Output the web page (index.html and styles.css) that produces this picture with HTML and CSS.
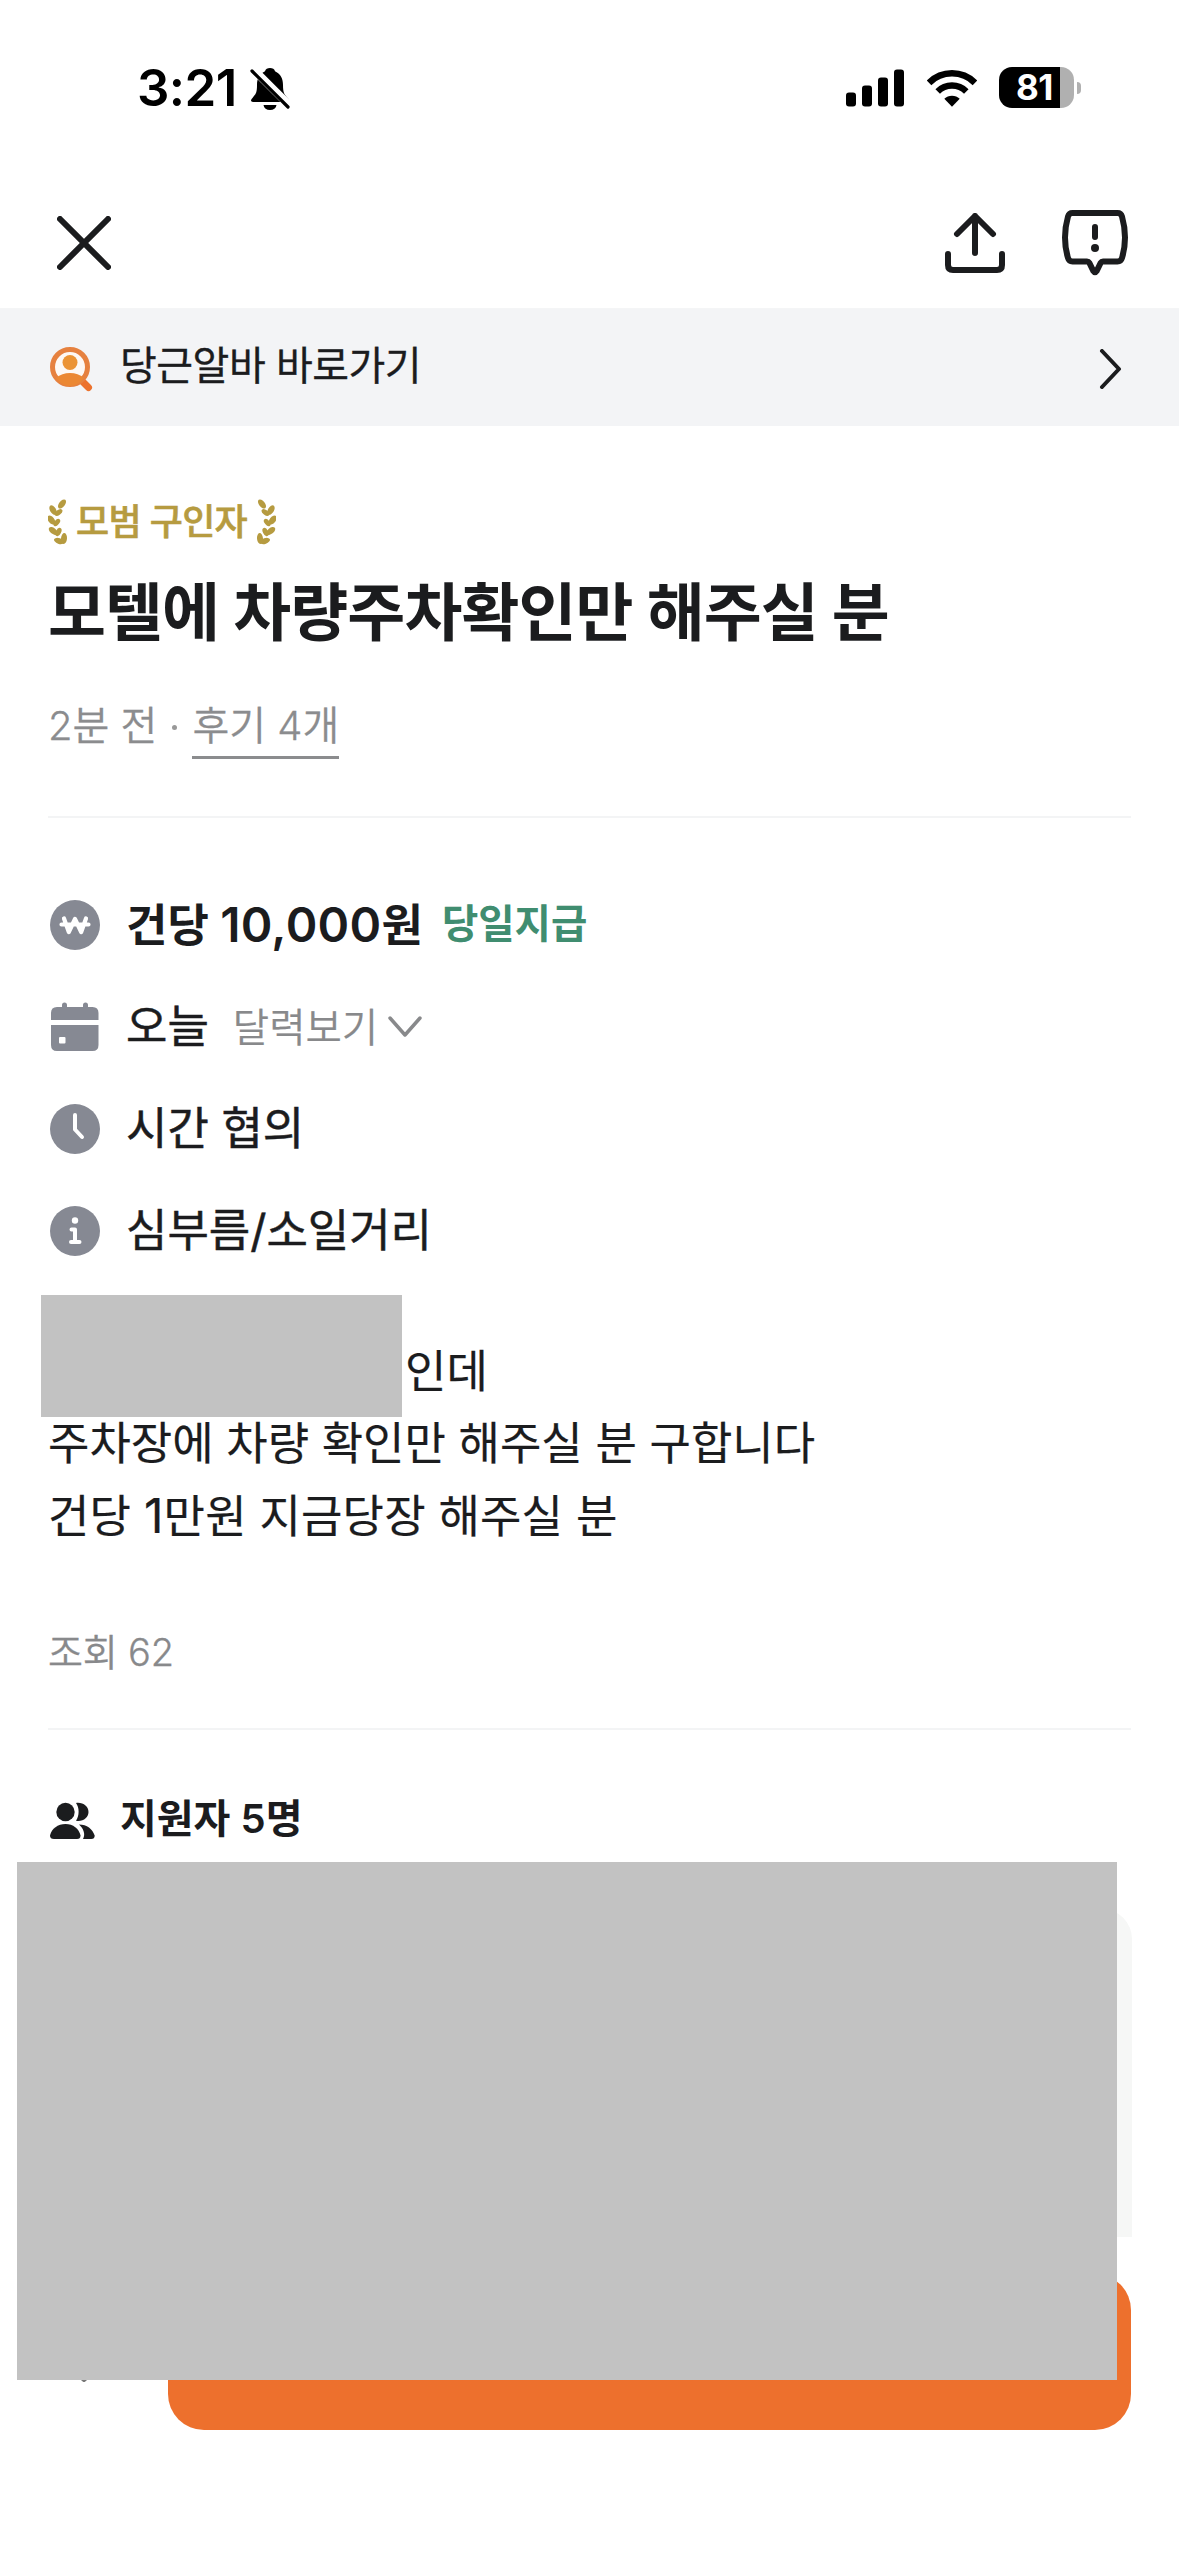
FILE: index.html
```html
<!DOCTYPE html>
<html lang="ko">
<head>
<meta charset="utf-8">
<title>당근알바</title>
<link rel="stylesheet" href="styles.css">
</head>
<body>
<div class="screen">
  <div class="status">
    <span class="time">3:21</span>
    <svg class="bell" width="40" height="44" viewBox="0 0 40 44"><path d="M20 1c-2.500 0-4.500 1.200-5 3.200C9 7 7 12 7 18c0 8-1.500 9.500-4.500 13C0 33.500 1 35 3 35h34c2 0 3-1.500.500-4-3-3.500-4.500-5-4.500-13 0-6-2-11-8-13.800C24.500 2.200 22.500 1 20 1z"/><path d="M13.500 38h13c-.5 3.300-3 5-6.500 5s-6-1.700-6.500-5z"/><path d="M3 2l36 36" stroke="#fff" stroke-width="8"/><path d="M2 4l36 36" stroke="#000" stroke-width="3.200" stroke-linecap="round"/></svg>
    <svg class="signal" width="58" height="38" viewBox="0 0 58 38"><rect y="23.500" width="10" height="14" rx="3"/><rect x="16" y="16.500" width="10" height="21" rx="3"/><rect x="32" y="8.500" width="10" height="29" rx="3"/><rect x="48" y=".5" width="10" height="37" rx="3"/></svg>
    <svg class="wifi" width="50" height="38" viewBox="0 0 50 38"><g fill="none" stroke="#000"><path d="M2 13.800a32.500 32.500 0 0 1 46 0" stroke-width="6.600"/><path d="M10.700 22.500a20.200 20.200 0 0 1 28.600 0" stroke-width="6.400"/></g><path d="M25 37.800l-7.700-8a11 11 0 0 1 15.400 0z"/></svg>
    <div class="battery"><span>81</span></div><i class="nub"></i>
  </div>
  <div class="nav">
    <svg width="54" height="54" viewBox="0 0 54 54"><path d="M3 3l48 48M51 3L3 51"/></svg>
    <svg class="share" width="60" height="60" viewBox="0 0 60 60"><path d="M30 40V3M12 21L30 3l18 18M3 41v11q0 5 5 5h44q5 0 5-5V41"/></svg>
    <svg class="report" width="66" height="66" viewBox="0 0 66 66"><path d="M10.500 3h45q3.500 0 4.500 3.500 3 10.500 3 21T60 48q-1 3.500-4.500 3.500H41q-1.500 0-2.300 1.300l-3.900 8q-1.800 2.700-3.600 0l-3.900-8Q26.500 51.500 25 51.500H10.500Q7 51.500 6 48 3 38 3 27.500T6 6.500Q7 3 10.500 3zM33 17v10"/><circle cx="33" cy="38" r="4"/></svg>
  </div>
  <div class="shortcut">
    <svg class="finder" width="44" height="46" viewBox="0 0 44 46"><path d="M30 33l8.500 8.500" stroke="#ec722d" stroke-width="7" stroke-linecap="round"/><circle cx="20" cy="21" r="17.500" fill="#fdf8f4" stroke="#e6813f" stroke-width="5"/><circle cx="20" cy="16.500" r="7.500" fill="#eb9334"/><path d="M6 32q6-5 14-5t14 5q-6 8-14 8T6 32z" fill="#eb8834"/></svg>
    <span>당근알바 바로가기</span>
    <svg class="chev" width="24" height="40" viewBox="0 0 24 40"><path d="M3 2l17 18L3 38"/></svg>
  </div>
  <div class="intro">
    <div class="badge">
      <svg width="20" height="46" viewBox="0 0 20 46"><g id="wreath"><ellipse cx="14" cy="5" rx="5.300" ry="3" transform="rotate(-52 14 5)"/><ellipse cx="5" cy="11" rx="5.200" ry="3" transform="rotate(60 5 11)"/><ellipse cx="10.500" cy="13.500" rx="4.500" ry="2.500" transform="rotate(-38 10.500 13.500)"/><ellipse cx="3.300" cy="21" rx="5.200" ry="3" transform="rotate(50 3.300 21)"/><ellipse cx="8.800" cy="23.500" rx="4.300" ry="2.500" transform="rotate(-50 8.800 23.500)"/><ellipse cx="5.300" cy="32" rx="5.200" ry="3" transform="rotate(38 5.300 32)"/><ellipse cx="10.500" cy="33" rx="4.500" ry="2.600" transform="rotate(-65 10.500 33)"/><ellipse cx="11" cy="42" rx="5.200" ry="2.800" transform="rotate(20 11 42)"/><ellipse cx="16" cy="39.500" rx="5.400" ry="3" transform="rotate(-85 16 39.500)"/></g></svg>
      <span>모범 구인자</span>
      <svg class="flip" width="20" height="46" viewBox="0 0 20 46"><use href="#wreath"/></svg>
    </div>
    <h1>모텔에 차량주차확인만 해주실 분</h1>
    <div class="meta"><span class="ago">2분 전</span><i></i><a>후기 4개</a></div>
  </div>
  <ul class="facts">
    <li>
      <svg width="50" height="50" viewBox="0 0 50 50"><circle cx="25" cy="25" r="25"/><path class="w" d="M14 18.500l4.800 13.500L25 19l6.200 13L36 18.500M11.500 24.500h27" stroke-width="4.200"/></svg>
      <b class="pay">건당 <span class="num">10,000</span>원</b><b class="green">당일지급</b>
    </li>
    <li>
      <svg width="50" height="50" viewBox="0 0 50 50"><path d="M1 18v-7q0-6 6-6h5V3q0-2.500 2.500-2.500T17 3v2h16V3q0-2.500 2.500-2.500T38 3v2h4.500q6 0 6 6v7zM1 23h47.500v20q0 6-6 6H7q-6 0-6-6z"/><rect x="9" y="35" width="6.500" height="6.500" rx="1" fill="#fff"/></svg>
      <span class="today">오늘</span><span class="cal">달력보기</span>
      <svg class="down" width="34" height="22" viewBox="0 0 34 22"><path d="M2 2l15 17L32 2"/></svg>
    </li>
    <li>
      <svg width="50" height="50" viewBox="0 0 50 50"><circle cx="25" cy="25" r="25"/><path class="w" d="M25 11v14.500l7 7.500" stroke-width="4"/></svg>
      <span class="when">시간 협의</span>
    </li>
    <li>
      <svg width="50" height="50" viewBox="0 0 50 50"><circle cx="25" cy="25" r="25"/><circle cx="25" cy="14.500" r="3.200" fill="#fff"/><path class="w" d="M21.500 23.500H25V36M21 36h8.500" stroke-width="4"/></svg>
      <span class="kind">심부름/소일거리</span>
    </li>
  </ul>
  <div class="body">
    <p class="l1"><span>인데</span></p>
    <p><span class="l2">주차장에 차량 확인만 해주실 분 구합니다</span></p>
    <p><span class="l3">건당 <span class="num">1</span>만원 지금당장 해주실 분</span></p>
    <div class="mask small"></div>
  </div>
  <div class="views"><span>조회 62</span></div>
  <div class="applicants">
    <svg width="46" height="38" viewBox="0 0 46 38"><circle cx="15.500" cy="10" r="9.200"/><path d="M0 33.500C1.500 26.500 8 22 15.500 22S29 26.500 30.500 33.500Q30.500 37 27 37H4q-4 0-4-3.500z"/><path d="M26 1c7-1 12.500 3.500 12.500 9S33 20 26 18.700c3.500-5 3.500-13 0-17.700zM29 22.500c8 0 13.500 4.500 15.700 11q0 3.500-3.500 3.500H33c3-5 0-11-4-14.500z"/></svg>
    <b>지원자 5명</b>
  </div>
  <div class="bottom">
    <div class="card"></div>
    <div class="actions"><svg width="24" height="16" viewBox="0 0 24 16"><path d="M3 5l9 8 9-8"/></svg><div class="apply"></div></div>
    <div class="mask big"></div>
  </div>
</div>
</body>
</html>
```
FILE: styles.css
```css
* { box-sizing: border-box; }
body { margin: 0; background: #fff; color: #1b1c1e; font-family: Inter, "Noto Sans CJK KR", sans-serif; }
.screen { width: 1179px; height: 2556px; background: #fff; overflow: hidden; }
svg { display: block; flex: none; }
span, b, a, h1 { white-space: nowrap; }

.status { height: 174px; display: flex; align-items: center; padding: 2px 98px 0 137px; color: #000; }
.time { font-size: 51px; font-weight: 600; width: 113px; letter-spacing: -.6px; margin-top: -2px; }
.bell { margin-top: 1px; }
.signal { margin-left: auto; }
.wifi { margin: 0 22px 0 23px; }
.battery { width: 75px; height: 41px; border-radius: 13px; background: linear-gradient(90deg, #000 61px, #b0b0b0 61px); color: #fff; display: flex; align-items: center; padding-left: 17px; font-size: 35px; font-weight: 700; line-height: 41px; letter-spacing: -.5px; margin-top: -2px; }
.nub { width: 4px; height: 12px; margin-left: 3px; background: #b0b0b0; border-radius: 0 6px 6px 0; }

.nav { height: 135px; display: flex; align-items: center; padding: 4px 51px 0 57px; border-bottom: 1px solid #f4f5f6; }
.nav path { fill: none; stroke: #1b1c1e; stroke-width: 6; stroke-linecap: round; stroke-linejoin: round; }
.nav circle { fill: #1b1c1e; }
.share { margin-left: auto; margin-right: 57px; }

.shortcut { height: 117px; background: #f3f4f6; display: flex; align-items: center; padding: 0 56px 0 50px; }
.finder { margin-top: 2px; }
.shortcut span { margin-left: 26px; font-size: 40px; line-height: 60px; margin-bottom: 4px; letter-spacing: -.5px; -webkit-text-stroke: .3px currentColor; }
.chev { margin-left: auto; margin-top: 3px; }
.chev path { fill: none; stroke: #1b1c1e; stroke-width: 4; stroke-linecap: round; stroke-linejoin: round; }

.intro { margin: 0 48px; height: 392px; padding-top: 70px; border-bottom: 2px solid #f3f4f5; }
.badge { display: flex; align-items: center; height: 52px; color: #b69b40; font-size: 36px; font-weight: 500; letter-spacing: -.7px; }
.badge svg { fill: #b69b40; }
.badge span { margin: 0 9px 0 8px; line-height: 52px; -webkit-text-stroke: .6px currentColor; }
.flip { transform: scaleX(-1); }
h1 { margin: 22px 0 0; font-size: 63px; line-height: 84px; font-weight: 700; letter-spacing: -.9px; }
.meta { display: flex; align-items: flex-start; height: 58px; margin-top: 48px; font-size: 40px; line-height: 48px; color: #8b8c8e; font-weight: 350; -webkit-text-stroke: .3px currentColor; }
.meta i { width: 5px; height: 5px; border-radius: 50%; background: #999; margin: 23px 15px 0; }
.meta a { height: 57px; border-bottom: 3px solid #8b8c8e; }

.facts { list-style: none; margin: 0; padding: 56px 48px 0 50px; height: 460px; }
.facts li { height: 102px; display: flex; align-items: center; font-size: 45px; line-height: 70px; }
.facts svg { fill: #868993; }
.facts .w { fill: none; stroke: #fff; stroke-linecap: round; stroke-linejoin: round; }
.facts svg + span, .facts svg + b { margin-left: 26px; }
.facts svg + span { -webkit-text-stroke: .5px currentColor; }
.facts b { font-weight: 600; }
.num { font-size: 48px; }
.facts .pay .num { letter-spacing: .3px; }
.facts .green { font-size: 39.5px; color: #408d70; margin-left: 19px; margin-top: -2px; }
.facts .cal { font-size: 39.5px; font-weight: 350; color: #88898b; margin-left: 24px; margin-top: 2px; -webkit-text-stroke: .2px currentColor; }
.facts .down { margin-left: 10px; }
.down path { fill: none; stroke: #88898b; stroke-width: 3.5; stroke-linecap: round; stroke-linejoin: round; }

.body { position: relative; height: 268px; padding: 58px 48px 0; font-size: 45px; -webkit-text-stroke: .2px currentColor; }
.body p { margin: 0; height: 72px; line-height: 72px; }
.body .l1 { padding-left: 357px; }
.l3 { letter-spacing: .15px; }
.mask { position: absolute; background: #c2c2c2; }
.small { left: 41px; top: 17px; width: 361px; height: 122px; }

.views { margin: 0 48px; height: 184px; padding-top: 76px; font-size: 38px; line-height: 60px; color: #88898b; font-weight: 350; border-bottom: 2px solid #f3f4f5; -webkit-text-stroke: .3px currentColor; letter-spacing: -.2px; }
.applicants { display: flex; align-items: center; height: 170px; padding-left: 50px; }
.applicants svg { margin-top: 12px; fill: #1b1c1e; }
.applicants b { font-size: 40px; font-weight: 600; margin: 1px 0 0 24px; }

.bottom { position: relative; height: 656px; padding: 9px 47px 0 48px; }
.card { height: 328px; background: #f6f7f6; border-radius: 30px 30px 0 0; }
.actions { display: flex; align-items: center; gap: 72px; margin-top: 37px; padding: 0 1px 0 24px; }
.actions svg { margin-top: 46px; fill: none; stroke: #777; stroke-width: 4; stroke-linejoin: round; }
.apply { flex: 1; height: 156px; border-radius: 36px; background: #ed702d; }
.big { left: 17px; top: -38px; width: 1100px; height: 518px; }
```
